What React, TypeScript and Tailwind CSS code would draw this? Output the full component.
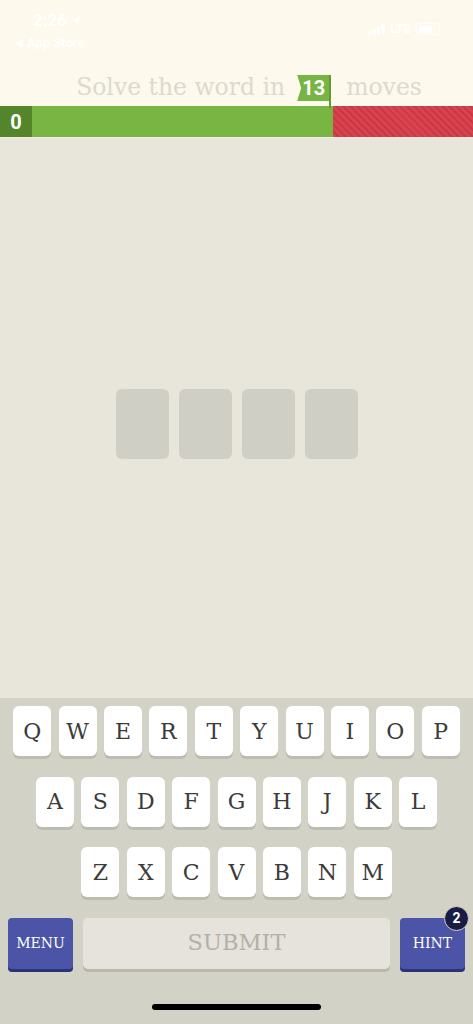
import React from 'react';

const rows = ['QWERTYUIOP', 'ASDFGHJKL', 'ZXCVBNM'];

function Key({ letter }: { letter: string }) {
  return (
    <button className="w-[38px] h-[50px] rounded-[6px] bg-white text-[#3b3b3b] text-[22px] shadow-[0_3px_0_#bdbcb1] flex items-center justify-center font-['DejaVu_Serif',serif]">
      {letter}
    </button>
  );
}

export default function App() {
  return (
    <div className="w-[473px] h-[1024px] flex flex-col overflow-hidden">
      {/* header */}
      <div className="h-[106px] bg-[#fdf9ec] flex flex-col">
        <div className="h-[58px] px-[33px] flex justify-between text-white font-['Roboto',sans-serif]">
          <div className="pt-[9px]">
            <div className="text-[17px] font-bold leading-[22px] flex items-center gap-1">
              2:26
              <svg width="11" height="11" viewBox="0 0 24 24" fill="white">
                <path d="M21 3 3 10.5l7.5 3L13.5 21z" />
              </svg>
            </div>
            <div className="text-[13px] font-semibold leading-[18px] mt-[3px] -ml-[18px] flex items-center gap-1">
              <span className="text-[10px]">◀</span> App Store
            </div>
          </div>
          <div className="pt-[20px] flex items-center gap-[5px] h-[38px]">
            <svg width="17" height="11" viewBox="0 0 17 11" fill="white">
              <rect x="0" y="7" width="3" height="4" rx="1" />
              <rect x="4.5" y="5" width="3" height="6" rx="1" />
              <rect x="9" y="2.5" width="3" height="8.5" rx="1" />
              <rect x="13.5" y="0" width="3" height="11" rx="1" />
            </svg>
            <span className="text-[13px] font-bold">LTE</span>
            <div className="w-[24px] h-[12px] rounded-[3px] border border-white/70 p-[1.5px]">
              <div className="w-[70%] h-full bg-white rounded-[1.5px]" />
            </div>
          </div>
        </div>
        <div className="flex-1 pt-[12px] pl-[25px] flex items-center justify-center text-[#dcdad0] text-[23.5px] font-['DejaVu_Serif',serif]">
          <span>Solve the word in</span>
          <span className="relative ml-[12px]">
            <span className="flex items-center justify-center w-[33px] h-[26px] bg-[#77b443] text-white text-[20px] font-bold font-['Roboto',sans-serif] [clip-path:polygon(0_0,100%_0,100%_100%,0_100%,4px_50%)]">
              13
            </span>
            <span className="absolute left-[32px] top-0 w-[2px] h-[33px] bg-[#5f9a33]" />
          </span>
          <span className="ml-[16px]">moves</span>
        </div>
      </div>

      {/* progress */}
      <div className="h-[32px] flex border-b border-[#f1eee5] font-['Roboto',sans-serif]">
        <div className="w-[32px] bg-[#55852b] text-white font-bold text-[20px] flex items-center justify-center">0</div>
        <div className="w-[301px] bg-[#79b543]" />
        <div className="flex-1 bg-[repeating-linear-gradient(45deg,#d8434f_0px,#d8434f_3px,#c93945_3px,#c93945_5px)]" />
      </div>

      {/* board */}
      <div className="flex-1 bg-[#e8e5da] flex justify-center pt-[251px] gap-[10px]">
        {[0, 1, 2, 3].map(i => (
          <div key={i} className="w-[53px] h-[70px] rounded-[6px] bg-[#d0cfc6]" />
        ))}
      </div>

      {/* keyboard */}
      <div className="h-[326px] bg-[#d3d2c7] flex flex-col items-center pt-[8px]">
        {rows.map((row, r) => (
          <div key={r} className="flex gap-[7.4px] mb-[20.5px]">
            {row.split('').map(l => (
              <Key key={l} letter={l} />
            ))}
          </div>
        ))}
        <div className="w-full px-[8px] flex gap-[10px]">
          <button className="w-[65px] h-[51px] rounded-[4px] bg-[#4b54a6] text-white text-[14px] shadow-[0_3px_0_#2c3278] font-['DejaVu_Serif',serif]">
            MENU
          </button>
          <button className="flex-1 h-[51px] rounded-[5px] bg-[#e6e3dc] text-[#b3b0a8] text-[22.5px] shadow-[0_3px_0_#b9b7ad] font-['DejaVu_Serif',serif]">
            SUBMIT
          </button>
          <button className="relative w-[65px] h-[51px] rounded-[4px] bg-[#4b54a6] text-white text-[14px] shadow-[0_3px_0_#2c3278] font-['DejaVu_Serif',serif]">
            HINT
            <span className="absolute -top-[12px] right-[-4px] w-[25px] h-[25px] rounded-full bg-[#191c45] border border-[#d3d2c7] text-white text-[14px] font-bold font-['Roboto',sans-serif] flex items-center justify-center">
              2
            </span>
          </button>
        </div>
        <div className="mt-[35px] w-[169px] h-[6px] rounded-full bg-black" />
      </div>
    </div>
  );
}
